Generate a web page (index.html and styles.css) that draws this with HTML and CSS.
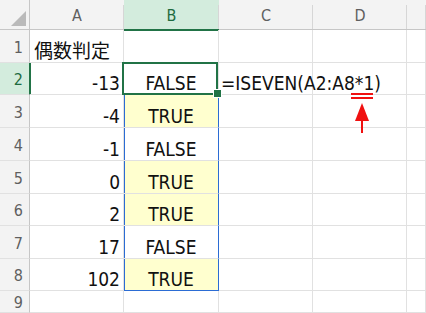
FILE: index.html
```html
<!DOCTYPE html>
<html lang="ja">
<head>
    <meta charset="UTF-8">
    <meta name="viewport" content="width=device-width, initial-scale=1.0">
    <title>偶数判定</title>
    <link rel="stylesheet" href="styles.css">
</head>
<body>
    <div class="sheet">
        <!-- column headers -->
        <div class="corner"><span class="corner-mark"></span></div>
        <div class="col-head">A</div>
        <div class="col-head active">B</div>
        <div class="col-head">C</div>
        <div class="col-head">D</div>
        <div class="col-head"></div>

        <!-- row 1 -->
        <div class="row-head">1</div>
        <div class="cell">偶数判定</div>
        <div class="cell"></div>
        <div class="cell"></div>
        <div class="cell"></div>
        <div class="cell"></div>

        <!-- row 2 -->
        <div class="row-head active">2</div>
        <div class="cell num">-13</div>
        <div class="cell bool current">FALSE</div>
        <div class="cell formula">=ISEVEN(A2:A8*1)</div>
        <div class="cell"></div>
        <div class="cell"></div>

        <!-- row 3 -->
        <div class="row-head">3</div>
        <div class="cell num">-4</div>
        <div class="cell bool range even">TRUE</div>
        <div class="cell"></div>
        <div class="cell"></div>
        <div class="cell"></div>

        <!-- row 4 -->
        <div class="row-head">4</div>
        <div class="cell num">-1</div>
        <div class="cell bool range">FALSE</div>
        <div class="cell"></div>
        <div class="cell"></div>
        <div class="cell"></div>

        <!-- row 5 -->
        <div class="row-head">5</div>
        <div class="cell num">0</div>
        <div class="cell bool range even">TRUE</div>
        <div class="cell"></div>
        <div class="cell"></div>
        <div class="cell"></div>

        <!-- row 6 -->
        <div class="row-head">6</div>
        <div class="cell num">2</div>
        <div class="cell bool range even">TRUE</div>
        <div class="cell"></div>
        <div class="cell"></div>
        <div class="cell"></div>

        <!-- row 7 -->
        <div class="row-head">7</div>
        <div class="cell num">17</div>
        <div class="cell bool range">FALSE</div>
        <div class="cell"></div>
        <div class="cell"></div>
        <div class="cell"></div>

        <!-- row 8 -->
        <div class="row-head">8</div>
        <div class="cell num">102</div>
        <div class="cell bool range even last">TRUE</div>
        <div class="cell"></div>
        <div class="cell"></div>
        <div class="cell"></div>

        <!-- row 9 -->
        <div class="row-head">9</div>
        <div class="cell"></div>
        <div class="cell"></div>
        <div class="cell"></div>
        <div class="cell"></div>
        <div class="cell"></div>

        <!-- red marker under "*1" -->
        <svg class="mark" width="30" height="46" viewBox="0 0 30 46">
            <rect x="3" y="3" width="22" height="2" fill="#f01010"/>
            <rect x="3" y="7" width="22" height="2" fill="#f01010"/>
            <polygon points="14,13 21,31 7,31" fill="#f01010"/>
            <rect x="13" y="30" width="2" height="13" fill="#f01010"/>
        </svg>
    </div>
</body>
</html>
```

FILE: styles.css
```css
* {
    box-sizing: border-box;
    margin: 0;
    padding: 0;
}
body {
    background-color: #ffffff;
    font-family: "DejaVu Sans Condensed", "DejaVu Sans", "Noto Sans CJK JP", sans-serif;
    font-stretch: condensed;
    overflow: hidden;
}
.sheet {
    position: relative;
    display: grid;
    grid-template-columns: 30px 94px 95px 94px 94px 1fr;
    grid-template-rows: 30px 33px 32px 33px 33px 33px 32px 33px 32px 1fr;
    height: 100vh;
}

/* headers */
.corner {
    display: flex;
    justify-content: flex-end;
    align-items: flex-end;
    padding: 0 3px 3px 0;
    background-color: #f3f3f3;
    border-right: 1px solid #c6c6c6;
    border-bottom: 1px solid #c6c6c6;
}
.corner-mark {
    width: 0;
    height: 0;
    border-left: 15px solid transparent;
    border-bottom: 15px solid #bababa;
}
.col-head {
    display: flex;
    justify-content: center;
    align-items: center;
    padding-top: 1px;
    font-size: 16px;
    color: #5f5f5f;
    background: #f3f3f3 linear-gradient(#d6d6d6, #d6d6d6) right 5px / 1px 100% no-repeat;
    border-bottom: 1px solid #c6c6c6;
}
.row-head {
    display: flex;
    justify-content: flex-end;
    align-items: center;
    padding: 2px 6px 0 0;
    font-size: 16px;
    color: #5f5f5f;
    background-color: #f3f3f3;
    border-right: 1px solid #c6c6c6;
    border-bottom: 1px solid #e1e1e1;
}
.col-head.active {
    color: #1e6b3f;
    background: #d3ecdd linear-gradient(#d6d6d6, #d6d6d6) right 5px / 1px 100% no-repeat;
    border-bottom-color: #217346;
    box-shadow: 0 1px 0 #217346;
}
.row-head.active {
    color: #1e6b3f;
    background-color: #d3ecdd;
    border-right-color: #217346;
    box-shadow: 1px 0 0 #217346;
}

/* cells */
.cell {
    display: flex;
    align-items: flex-end;
    padding: 0 4px 1px;
    font-size: 19px;
    line-height: 19px;
    color: #111111;
    white-space: nowrap;
    border-right: 1px solid #e1e1e1;
    border-bottom: 1px solid #e1e1e1;
}
.cell.num {
    justify-content: flex-end;
    padding-right: 3px;
}
.cell.bool {
    justify-content: center;
}
.cell.formula {
    padding-left: 2px;
}
.cell.range {
    border-right-color: #2b6cd4;
    box-shadow: inset 1px 0 0 #2b6cd4;
}
.cell.range.last {
    border-bottom-color: #2b6cd4;
}
.cell.even {
    background-color: #ffffcf;
}

/* active cell frame with fill handle */
.cell.current {
    position: relative;
}
.cell.current::after {
    content: "";
    position: absolute;
    top: -1px;
    left: -2px;
    right: 0;
    bottom: -1px;
    border: 2px solid #217346;
}
.cell.current::before {
    content: "";
    position: absolute;
    right: -4px;
    bottom: -4px;
    width: 7px;
    height: 7px;
    background-color: #217346;
    border: 1px solid #ffffff;
    z-index: 1;
}

.mark {
    position: absolute;
    left: 348px;
    top: 90px;
}
```
